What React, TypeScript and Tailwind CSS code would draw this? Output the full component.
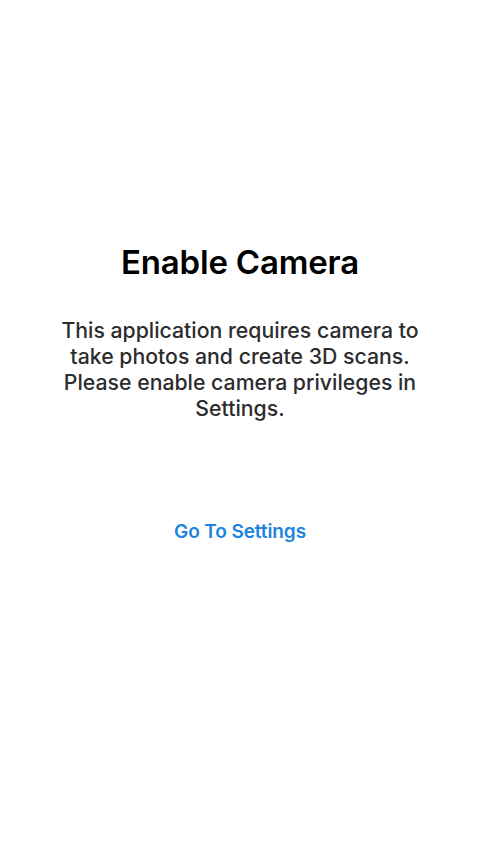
import React from "react";

export default function App() {
  return (
    <div
      className="min-h-[854px] w-full bg-white flex flex-col items-center pt-[241px]"
      style={{ fontFamily: "Inter, 'Noto Sans', sans-serif" }}
    >
      <h1 className="text-[33px] leading-[43px] font-semibold text-black tracking-[-0.2px]">
        Enable Camera
      </h1>
      <p className="mt-[33px] text-center text-[21.25px] leading-[26px] font-medium text-[#2c2c2e]">
        This application requires camera to
        <br />
        take photos and create 3D scans.
        <br />
        Please enable camera privileges in
        <br />
        Settings.
      </p>
      <button className="mt-[99px] text-[19px] leading-[24px] font-semibold text-[#1d84de] tracking-[-0.1px]">
        Go To Settings
      </button>
    </div>
  );
}
